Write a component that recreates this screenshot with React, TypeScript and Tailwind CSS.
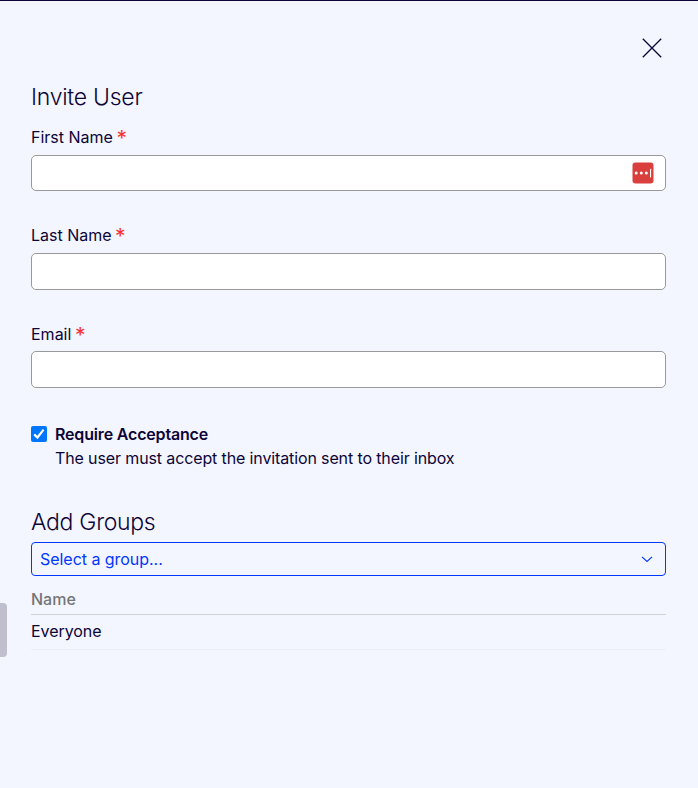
import React from 'react';

const FIELDS = [
  { id: 'firstName', label: 'First Name', box: 'h-9 mt-1.5 mb-8', badge: true },
  { id: 'lastName', label: 'Last Name', box: 'h-[37px] mt-1.5 mb-8' },
  { id: 'email', label: 'Email', box: 'h-[37px] mt-[5px] mb-[34px]' },
];

const PasswordBadge: React.FC = () => (
  <svg width="22" height="22" viewBox="0 0 22 22" aria-hidden="true">
    <rect x="0.5" y="0.5" width="21" height="21" rx="3" fill="#d93f3c" />
    <circle cx="4.2" cy="11" r="1.5" fill="#fff" />
    <circle cx="9.3" cy="11" r="1.5" fill="#fff" />
    <circle cx="14.3" cy="11" r="1.5" fill="#fff" />
    <rect x="18" y="6.8" width="1.1" height="8.6" rx="0.4" fill="#fff" />
  </svg>
);

const GROUPS = ['Everyone'];

export default function App() {
  return (
    <div className="relative h-[788px] bg-[#f3f6ff] border-t border-[#0d0437] pl-[31px] pr-8 font-['Inter',sans-serif] text-base text-[#0d0437]">
      <div className="flex justify-end pt-[37px] pr-1">
        <button type="button" aria-label="Close" className="block">
          <svg width="20" height="20" viewBox="0 0 20 20" fill="none" stroke="currentColor" strokeWidth="1.3">
            <path d="M0.8 0.8 19.2 19.2M19.2 0.8 0.8 19.2" />
          </svg>
        </button>
      </div>

      <h2 className="mt-[23px] mb-3 text-[23px] leading-8 font-light tracking-[-0.25px]">Invite User</h2>

      {FIELDS.map((f) => (
        <div key={f.id}>
          <label htmlFor={f.id} className="flex items-start h-6 leading-6">
            {f.label}
            <span className="ml-[3.5px] mt-0.5 text-[#f8312f] text-[21px] leading-6">*</span>
          </label>
          <div className={`flex items-center bg-white border border-[#999] rounded-[5px] pr-[11px] ${f.box}`}>
            <input id={f.id} type="text" className="flex-1 h-full bg-transparent px-2 outline-none" />
            {f.badge && <PasswordBadge />}
          </div>
        </div>
      ))}

      <label className="flex items-start gap-2 leading-6">
        <svg className="mt-1 shrink-0" width="16" height="16" viewBox="0 0 16 16">
          <rect width="16" height="16" rx="2" fill="#0075ff" />
          <path d="M3.2 8.4 6.4 11.5 12.6 3.6" fill="none" stroke="#fff" strokeWidth="2.2" />
        </svg>
        <span>
          <span className="block font-semibold tracking-[-0.17px]">Require Acceptance</span>
          <span className="block tracking-[-0.125px]">The user must accept the invitation sent to their inbox</span>
        </span>
      </label>

      <h2 className="mt-9 mb-1 text-[23px] leading-8 font-light tracking-[-0.3px]">Add Groups</h2>
      <button
        type="button"
        className="flex w-full h-[34px] items-center justify-between border border-[#0037ff] rounded-[4px] pl-2 pr-3 text-[#0037ff] tracking-[-0.04px]"
      >
        Select a group...
        <svg width="12" height="12" viewBox="0 0 12 12" fill="none" stroke="currentColor" strokeWidth="1.1">
          <path d="M1 3.8 6 8.4 11 3.8" />
        </svg>
      </button>

      <table className="w-full mt-[11px] text-left leading-6 border-separate border-spacing-0">
        <thead>
          <tr>
            <th className="h-7 p-0 pb-[3px] border-b border-[#d3d3d3] font-medium text-[#757575]">Name</th>
          </tr>
        </thead>
        <tbody>
          {GROUPS.map((name) => (
            <tr key={name}>
              <td className="h-[35px] p-0 pb-[2px] border-b border-[#ebeef3] tracking-[-0.06px]">{name}</td>
            </tr>
          ))}
        </tbody>
      </table>

      {/* drag handle sits over the panel's left edge */}
      <div className="absolute left-0 top-[602px] w-[7px] h-[54px] rounded-r-[4px] bg-[#bfbfcd]" />
    </div>
  );
}
